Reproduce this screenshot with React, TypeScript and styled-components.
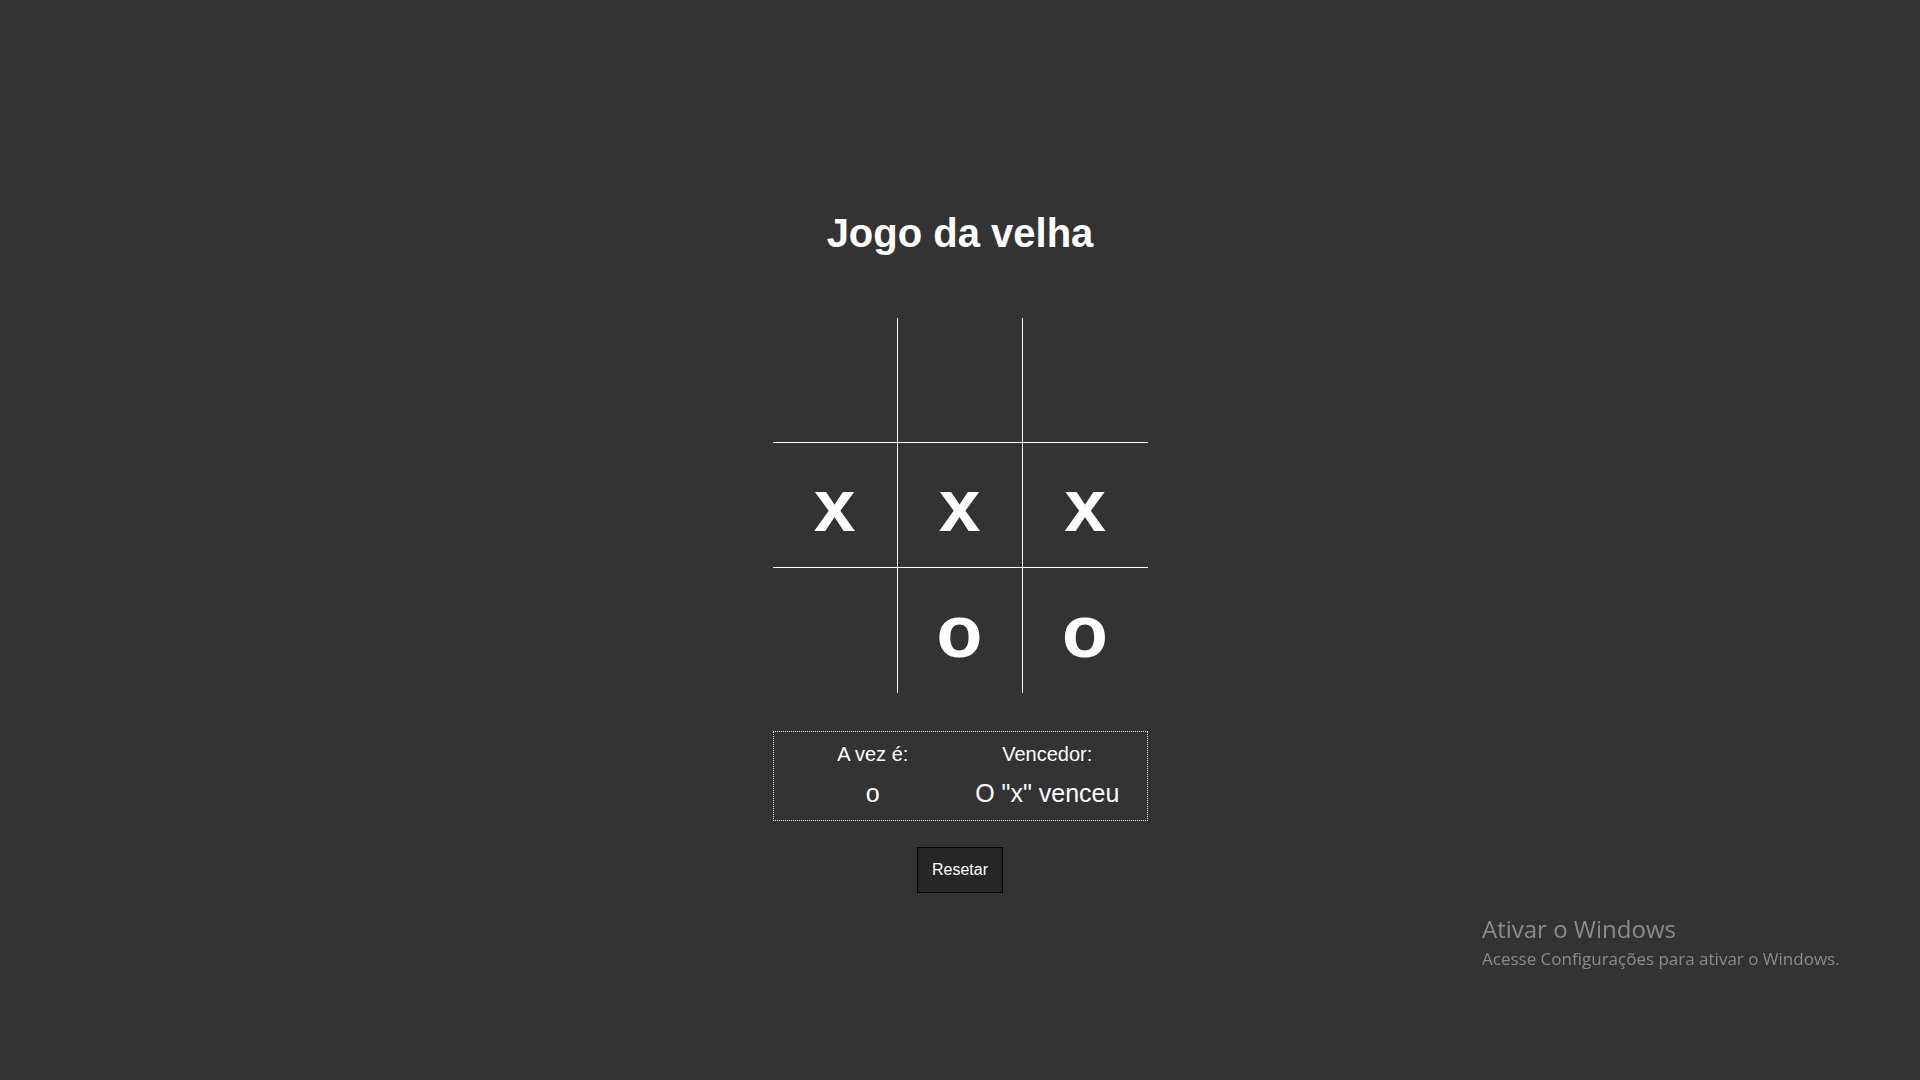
import React from "react";
import styled, { createGlobalStyle } from "styled-components";

const GlobalStyle = createGlobalStyle`
  html, body {
    margin: 0;
    padding: 0;
    background: #333333;
    min-height: 100%;
  }
  body {
    font-family: "Liberation Sans", Arial, sans-serif;
    color: #ffffff;
  }
`;

const Page = styled.main`
  min-height: 1080px;
  display: flex;
  flex-direction: column;
  align-items: center;
  padding-top: 210px;
  box-sizing: border-box;
`;

const Title = styled.h1`
  margin: 0;
  font-size: 40px;
  line-height: 46px;
  font-weight: 700;
  color: #ffffff;
`;

const Board = styled.div`
  margin-top: 62px;
  display: grid;
  grid-template-columns: repeat(3, 125px);
  grid-template-rows: repeat(3, 125px);
`;

const Cell = styled.div<{ $right: boolean; $bottom: boolean }>`
  box-sizing: border-box;
  display: flex;
  align-items: center;
  justify-content: center;
  border-right: ${(p) => (p.$right ? "1px solid #ffffff" : "none")};
  border-bottom: ${(p) => (p.$bottom ? "1px solid #ffffff" : "none")};
  font-size: 75px;
  font-weight: 700;
  color: #ffffff;
  cursor: pointer;
`;

const Info = styled.div`
  margin-top: 38px;
  width: 375px;
  box-sizing: border-box;
  border: 1px dotted #e8e8e8;
  padding: 11px 12px 12px;
  display: grid;
  grid-template-columns: 1fr 1fr;
  text-align: center;
`;

const InfoColumn = styled.div`
  display: flex;
  flex-direction: column;
  align-items: center;
  gap: 13px;
`;

const Label = styled.span`
  font-size: 20px;
  line-height: 23px;
`;

const Value = styled.span`
  font-size: 25px;
  line-height: 29px;
`;

const ResetButton = styled.button`
  margin-top: 26px;
  font-family: "Liberation Sans", Arial, sans-serif;
  font-size: 16px;
  line-height: 18px;
  padding: 13px 14px;
  background: #262626;
  color: #ffffff;
  border: 1px solid #000000;
  cursor: pointer;
`;

const Watermark = styled.div`
  position: fixed;
  left: 1482px;
  top: 913px;
  font-family: "Open Sans", "Noto Sans", sans-serif;
  color: #8a8a8a;
  pointer-events: none;
`;

const WatermarkTitle = styled.div`
  font-size: 24px;
  line-height: 32px;
`;

const WatermarkText = styled.div`
  margin-top: 2px;
  font-size: 17px;
  line-height: 24px;
`;

const cells = ["", "", "", "x", "x", "x", "", "o", "o"];

export default function App() {
  return (
    <>
      <GlobalStyle />
      <Page>
        <Title>Jogo da velha</Title>
        <Board>
          {cells.map((v, i) => (
            <Cell key={i} $right={i % 3 < 2} $bottom={i < 6}>
              {v}
            </Cell>
          ))}
        </Board>
        <Info>
          <InfoColumn>
            <Label>A vez é:</Label>
            <Value>o</Value>
          </InfoColumn>
          <InfoColumn>
            <Label>Vencedor:</Label>
            <Value>O "x" venceu</Value>
          </InfoColumn>
        </Info>
        <ResetButton>Resetar</ResetButton>
      </Page>
      <Watermark>
        <WatermarkTitle>Ativar o Windows</WatermarkTitle>
        <WatermarkText>Acesse Configurações para ativar o Windows.</WatermarkText>
      </Watermark>
    </>
  );
}
